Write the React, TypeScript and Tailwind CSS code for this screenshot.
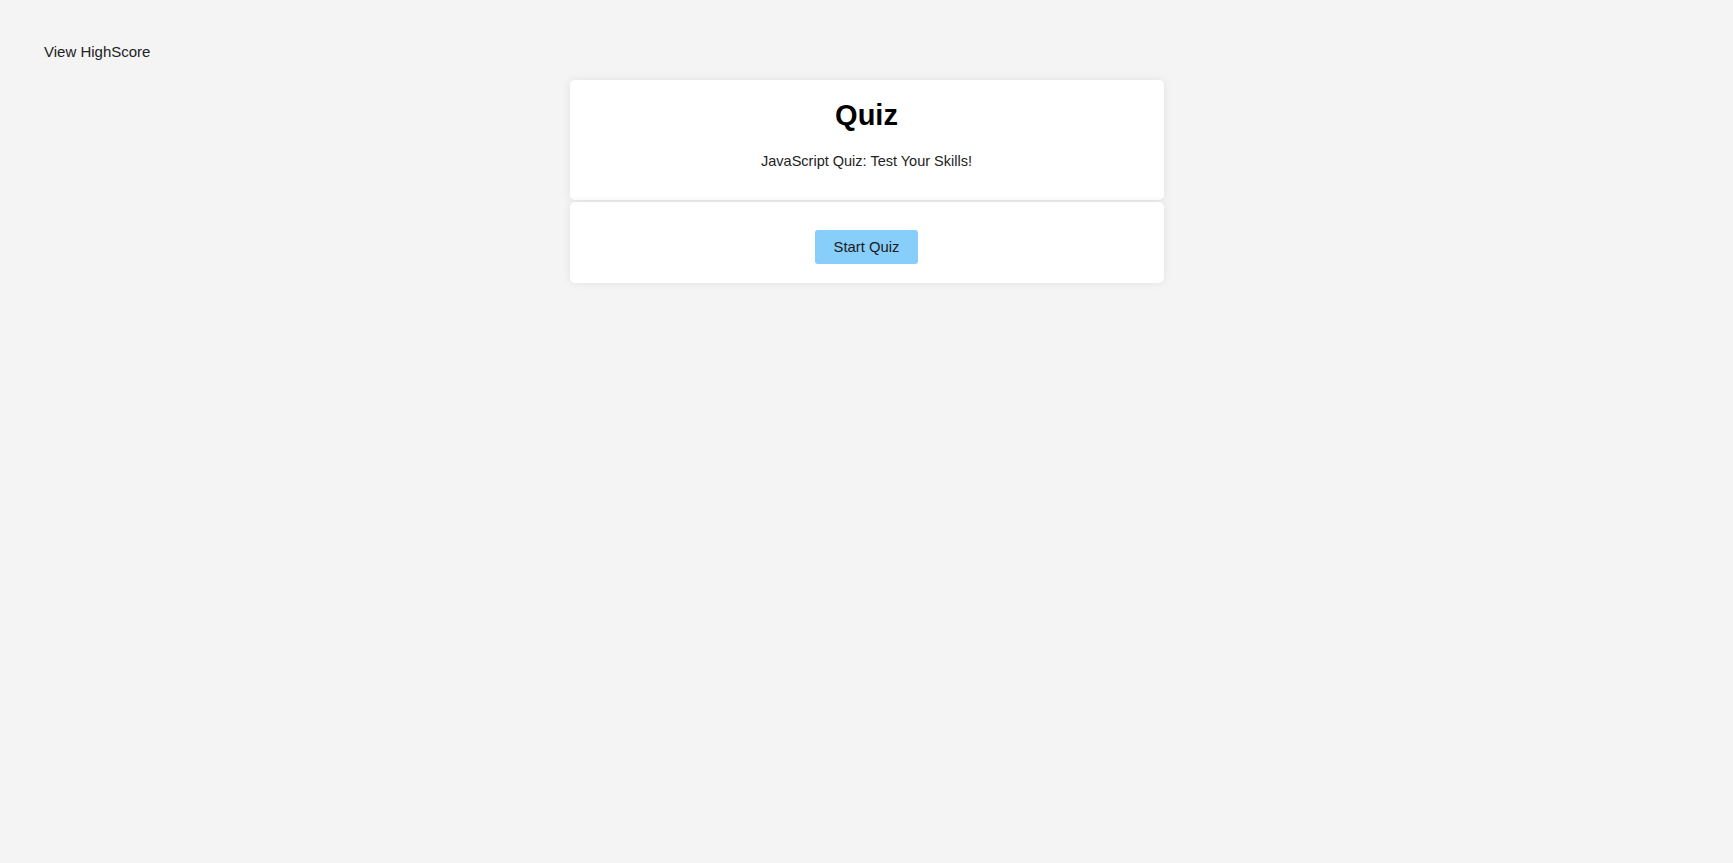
export default function App() {
  return (
    <div className="min-h-screen bg-[#f4f4f4] font-['Liberation_Sans',Arial,sans-serif] text-[#222]">
      <header className="px-[44px] pt-[42px] text-[15px] leading-[20px]">
        <a className="block w-fit cursor-pointer">View HighScore</a>
      </header>

      <main className="mx-auto mt-[18px] flex w-[594px] flex-col gap-[2px]">
        <section className="flex flex-col items-center rounded-[5px] bg-white pt-[17px] pb-[29px] shadow-[0_0_8px_rgba(0,0,0,0.08)]">
          <h1 className="text-[29px] leading-[36px] font-bold text-black">Quiz</h1>
          <p className="mt-[18px] text-[14.5px] leading-[20px]">
            JavaScript Quiz: Test Your Skills!
          </p>
        </section>

        <section className="flex justify-center rounded-[5px] bg-white pt-[28px] pb-[19px] shadow-[0_0_8px_rgba(0,0,0,0.08)]">
          <button className="h-[34px] w-[103px] rounded-[3px] bg-[#87cefa] text-[14.8px] text-[#1a1a1a]">
            Start Quiz
          </button>
        </section>
      </main>
    </div>
  );
}
